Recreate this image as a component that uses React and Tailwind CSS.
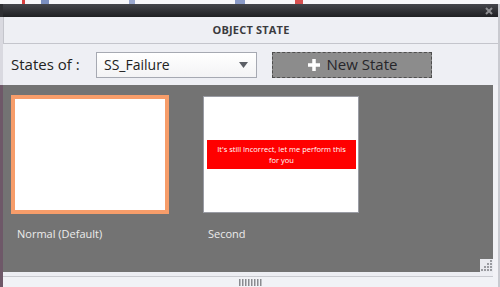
import { useState } from 'react';

const states = [
  { id: 'normal', label: 'Normal (Default)' },
  { id: 'second', label: 'Second', lines: ["It's still Incorrect, let me perform this", 'for you'] },
];

function Grip() {
  const dots = [];
  for (let r = 0; r < 4; r++) {
    for (let c = 3 - r; c < 4; c++) {
      dots.push(<rect key={r + '-' + c} x={1 + c * 3} y={1 + r * 3} width="2" height="2" fill="#9a9ba0" />);
    }
  }
  return (
    <svg width="13" height="13" viewBox="0 0 13 13">
      {dots}
    </svg>
  );
}

function Banner({ lines }) {
  return (
    <div className="w-full h-[29px] bg-[#ff0000] flex flex-col items-center justify-center text-white text-[7.5px] leading-[11px]">
      {lines.map((l) => (
        <span key={l} className="whitespace-nowrap">{l}</span>
      ))}
    </div>
  );
}

export default function App() {
  const [current, setCurrent] = useState('normal');

  return (
    <div className="w-[500px] h-[287px] bg-[#f2f2f6] flex flex-col font-['Open_Sans',sans-serif] overflow-hidden">
      <div className="h-[4px] bg-[#f7f7fa] flex">
        <div className="ml-[22px] w-[3px] bg-[#d94040]" />
        <div className="ml-[16px] w-[8px] bg-[#7b8fc0]" />
        <div className="ml-[80px] w-[6px] bg-[#9aa8cf]" />
        <div className="ml-[100px] w-[10px] bg-[#8a9ac8]" />
        <div className="ml-[50px] w-[8px] bg-[#d85050]" />
      </div>
      <div className="flex-1 flex">
        <div className="w-[3px] flex flex-col">
          <div className="h-[13px] bg-[#2e2f33]" />
          <div className="h-[68px] bg-[#d9d9e0]" />
          <div className="flex-1 bg-[#6e5868]" />
        </div>
        <div className="flex-1 flex flex-col border-r-2 border-[#c9cad0]">
          <div className="h-[13px] bg-gradient-to-b from-[#45464c] to-[#1f2023] flex items-center justify-end pr-[5px]">
            <svg width="8" height="8" viewBox="0 0 8 8">
              <path d="M1 1 L7 7 M7 1 L1 7" stroke="#8e8e92" strokeWidth="2" />
            </svg>
          </div>
          <div className="h-[27px] bg-[#eeeff4] border-b border-[#c4c5cc] border-l border-l-[#c4c5cc] flex items-center justify-center">
            <span className="text-[11px] font-bold text-[#3b3b3f] tracking-[0.2px]">OBJECT STATE</span>
          </div>
          <div className="h-[41px] bg-[#eeeff4] flex items-center pl-[8px]">
            <span className="w-[85px] text-[15px] text-[#222]">States of :</span>
            <div className="w-[161px] h-[26px] border border-[#a6a9b2] bg-gradient-to-b from-white to-[#f3f3f5] flex items-center justify-between pl-[7px] pr-[8px]">
              <span className="text-[14px] text-[#222]">SS_Failure</span>
              <svg width="9" height="6" viewBox="0 0 9 6">
                <path d="M0 0 L9 0 L4.5 6 Z" fill="#5c5f66" />
              </svg>
            </div>
            <button className="ml-[15px] w-[160px] h-[26px] bg-[#8c8c8c] border border-dashed border-[#4e4e4e] flex items-center justify-center gap-[6px]">
              <svg width="14" height="14" viewBox="0 0 14 14">
                <path d="M7 1 V13 M1 7 H13" stroke="#fff" strokeWidth="3.5" />
              </svg>
              <span className="text-[15px] text-[#26262a]">New State</span>
            </button>
          </div>
          <div className="h-[187px] bg-[#737373] mr-[5px] relative pl-[8px] pt-[10px] flex gap-[33px]">
            {states.map((s) => (
              <div key={s.id} className="flex flex-col cursor-pointer" onClick={() => setCurrent(s.id)}>
                {current === s.id ? (
                  <div className="w-[158px] h-[119px] border-4 border-[#f79d6a] bg-white flex items-center">
                    {s.lines && <Banner lines={s.lines} />}
                  </div>
                ) : (
                  <div className="w-[158px] h-[119px] p-px">
                    <div className="w-full h-full border border-[#9a9ca4] bg-white flex items-center pl-[3px] pr-[2px]">
                      {s.lines && <Banner lines={s.lines} />}
                    </div>
                  </div>
                )}
                <span className="mt-[12px] pl-[6px] text-[11px] text-[#ececec]">{s.label}</span>
              </div>
            ))}
            <div className="absolute right-0 bottom-0 w-[13px] h-[13px] bg-[#e9eaef]">
              <Grip />
            </div>
          </div>
          <div className="h-[5px] bg-[#edeef3] border-b border-[#c9cad0] mr-[5px]" />
          <div className="h-[10px] bg-[#f1f2f6] flex items-center justify-center">
            <svg width="24" height="7" viewBox="0 0 24 7">
              {[0, 1, 2, 3, 4, 5, 6, 7].map((i) => (
                <rect key={i} x={i * 3} y="0" width="1.5" height="7" fill="#8a8b90" />
              ))}
            </svg>
          </div>
        </div>
      </div>
    </div>
  );
}
